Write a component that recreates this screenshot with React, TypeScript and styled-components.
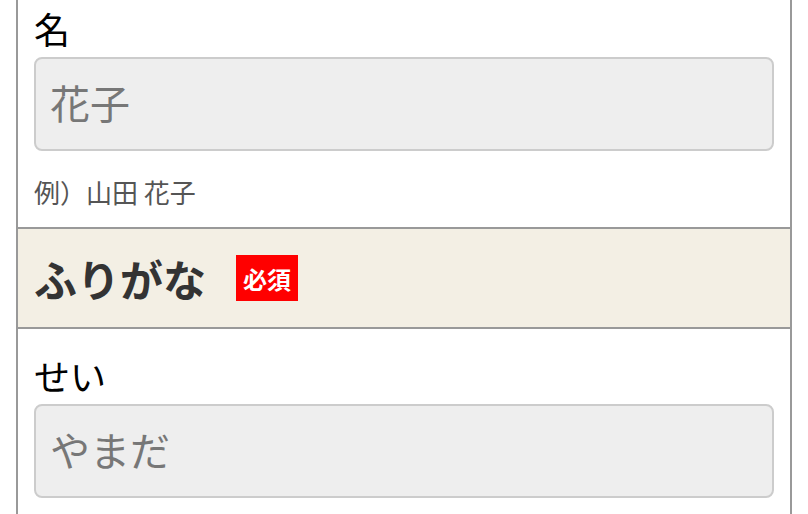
import React from 'react'
import styled, { createGlobalStyle } from 'styled-components'

const GlobalStyle = createGlobalStyle`
  html, body {
    margin: 0;
    padding: 0;
    background: #fff;
    overflow: hidden;
  }
  body {
    font-family: "Noto Sans CJK JP", "Noto Sans", sans-serif;
  }
`

const Form = styled.div`
  width: 776px;
  box-sizing: border-box;
  margin: -18px 16px 0 16px;
  border-left: 2px solid #999;
  border-right: 2px solid #999;
`

const Field = styled.div`
  padding: 24px 16px 16px 16px;
`

const Label = styled.label`
  display: block;
  font-size: 36px;
  line-height: 44px;
  color: #000;
  margin-bottom: 7px;
`

const TextInput = styled.input`
  display: block;
  box-sizing: border-box;
  width: 100%;
  height: 94px;
  padding: 0 14px 4px 14px;
  border: 2px solid #ccc;
  border-radius: 8px;
  background: #eee;
  font-family: inherit;
  font-size: 40px;
  color: #333;
  outline: none;
  &::placeholder {
    color: #777;
  }
`

const Hint = styled.p`
  margin: 22px 0 0 0;
  font-size: 26px;
  line-height: 38px;
  color: #555;
`

const GroupHeader = styled.div`
  display: flex;
  align-items: center;
  height: 98px;
  padding: 0 16px;
  background: #f3efe4;
  border-top: 2px solid #999;
  border-bottom: 2px solid #999;
`

const GroupTitle = styled.h2`
  margin: 0;
  font-size: 43px;
  font-weight: 700;
  line-height: 1;
  color: #333;
`

const Required = styled.span`
  display: inline-flex;
  align-items: center;
  justify-content: center;
  margin-left: 30px;
  width: 62px;
  height: 46px;
  background: #f00;
  color: #fff;
  font-size: 24px;
  font-weight: 700;
`

const App: React.FC = () => {
  return (
    <>
      <GlobalStyle />
      <Form>
        <Field>
          <Label>名</Label>
          <TextInput placeholder="花子" />
          <Hint>例）山田 花子</Hint>
        </Field>
        <GroupHeader>
          <GroupTitle>ふりがな</GroupTitle>
          <Required>必須</Required>
        </GroupHeader>
        <Field>
          <Label>せい</Label>
          <TextInput placeholder="やまだ" />
        </Field>
      </Form>
    </>
  )
}

export default App
